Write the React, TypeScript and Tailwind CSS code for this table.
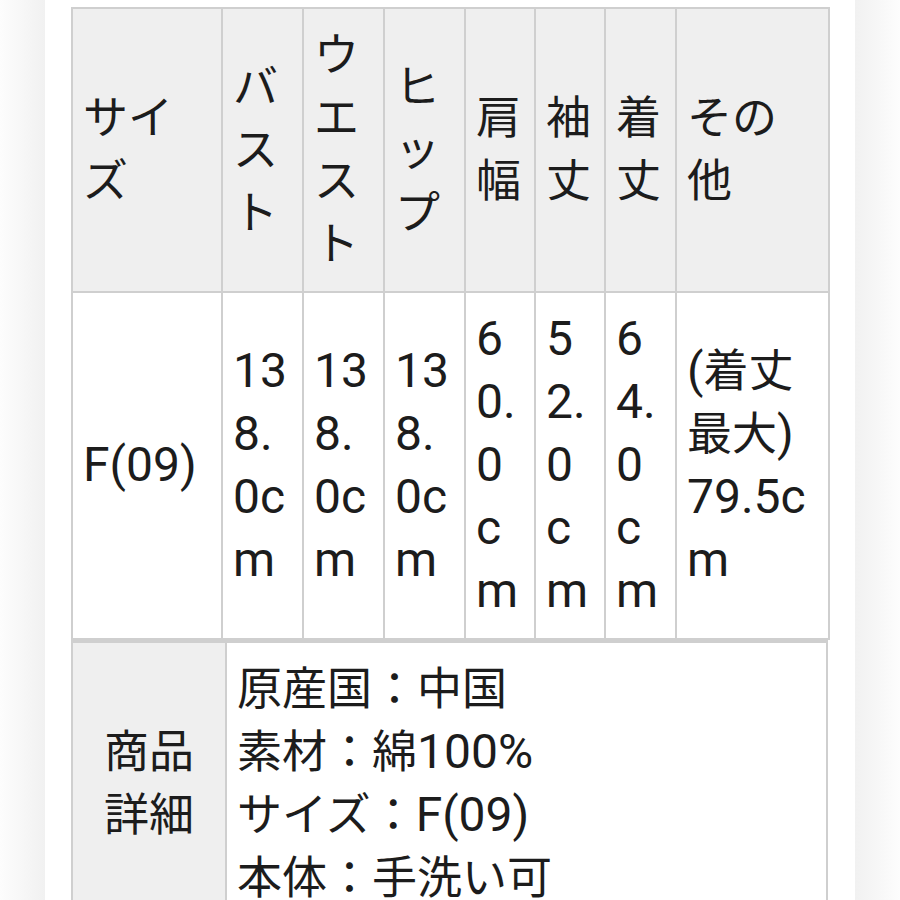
const headers = ['サイズ', 'バスト', 'ウエスト', 'ヒップ', '肩幅', '袖丈', '着丈', 'その他'];
const values = ['F(09)', '138.0cm', '138.0cm', '138.0cm', '60.0cm', '52.0cm', '64.0cm', '(着丈最大)79.5cm'];
const colClasses = ['w-[150px]', 'w-[81px]', 'w-[81px]', 'w-[81px]', 'w-[70px]', 'w-[70px]', 'w-[71px]', 'w-[153px]'];

const details = ['原産国：中国', '素材：綿100%', 'サイズ：F(09)', '本体：手洗い可'];

// latin runs render a little larger than the kana/kanji in the screenshot
function Mixed({ text }: { text: string }) {
    const parts = text.split(/([\x20-\x7e]+)/).filter(Boolean);
    return (
        <>
            {parts.map((part, i) =>
                /^[\x20-\x7e]+$/.test(part) ? (
                    <span key={i} className="text-[48px] leading-none">
                        {part}
                    </span>
                ) : (
                    <span key={i}>{part}</span>
                ),
            )}
        </>
    );
}

const cell = 'border-2 border-[#cfcfcf] px-[10px] py-[15px] align-middle';

export default function App() {
    return (
        <div className="flex min-h-[900px] w-[900px] overflow-hidden bg-white font-['Roboto','Noto_Sans_CJK_JP',sans-serif] text-[#1c1c1c]">
            <div className="w-[45px] shrink-0 bg-gradient-to-r from-[#fdfdfd] to-[#f1f1f1]" />
            <div className="w-[810px] shrink-0 bg-white pl-[26px] pt-[7px]">
                <table className="w-[757px] table-fixed border-collapse break-all text-[45px] leading-[63px]">
                    <colgroup>
                        {colClasses.map((c, i) => (
                            <col key={i} className={c} />
                        ))}
                    </colgroup>
                    <tbody>
                        <tr>
                            {headers.map((h) => (
                                <th key={h} className={`${cell} bg-[#efefef] text-left font-normal`}>
                                    {h}
                                </th>
                            ))}
                        </tr>
                        <tr>
                            {values.map((v, i) => (
                                <td key={i} className={`${cell} bg-white`}>
                                    <Mixed text={v} />
                                </td>
                            ))}
                        </tr>
                    </tbody>
                </table>
                <table className="w-[757px] table-fixed border-collapse text-[45px] leading-[63px]">
                    <colgroup>
                        <col className="w-[154px]" />
                        <col />
                    </colgroup>
                    <tbody>
                        <tr>
                            <th className={`${cell} border-t-[3px] bg-[#efefef] text-center font-normal`}>
                                商品
                                <br />
                                詳細
                            </th>
                            <td className={`${cell} border-t-[3px] bg-white`}>
                                {details.map((d) => (
                                    <div key={d}>
                                        <Mixed text={d} />
                                    </div>
                                ))}
                            </td>
                        </tr>
                    </tbody>
                </table>
            </div>
            <div className="w-[45px] shrink-0 bg-gradient-to-l from-[#fdfdfd] to-[#f1f1f1]" />
        </div>
    );
}
